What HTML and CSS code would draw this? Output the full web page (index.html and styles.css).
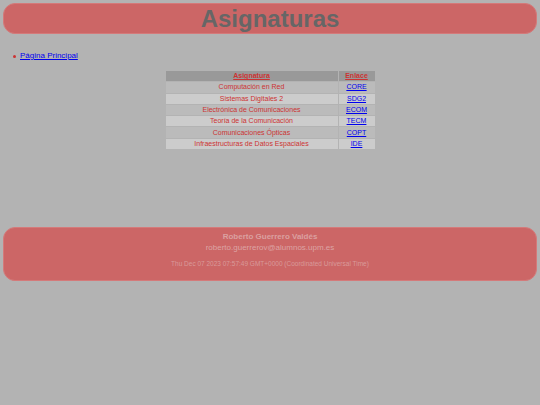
FILE: index.html
```html
<!DOCTYPE html>
<html lang="es">
<head>
<meta charset="utf-8">
<title>Asignaturas</title>
<link rel="stylesheet" href="styles.css">
</head>
<body>
<header class="banner"><h1 class="title">Asignaturas</h1></header>
<main class="content">
  <ul class="nav">
    <li><a href="#">Página Principal</a></li>
  </ul>
  <table class="subjects">
    <thead>
      <tr><th class="c1">Asignatura</th><th class="c2">Enlace</th></tr>
    </thead>
    <tbody>
      <tr class="odd"><td>Computación en Red</td><td class="lnk"><a href="#">CORE</a></td></tr>
      <tr class="even"><td>Sistemas Digitales 2</td><td class="lnk"><a href="#">SDG2</a></td></tr>
      <tr class="odd"><td>Electrónica de Comunicaciones</td><td class="lnk"><a href="#">ECOM</a></td></tr>
      <tr class="even"><td>Teoría de la Comunicación</td><td class="lnk"><a href="#">TECM</a></td></tr>
      <tr class="odd"><td>Comunicaciones Ópticas</td><td class="lnk"><a href="#">COPT</a></td></tr>
      <tr class="even"><td>Infraestructuras de Datos Espaciales</td><td class="lnk"><a href="#">IDE</a></td></tr>
    </tbody>
  </table>
</main>
<footer class="foot">
  <div class="name">Roberto Guerrero Valdés</div>
  <div class="mail">roberto.guerrerov@alumnos.upm.es</div>
  <div class="date">Thu Dec 07 2023 07:57:49 GMT+0000 (Coordinated Universal Time)</div>
</footer>
</body>
</html>
```
FILE: styles.css
```css
html, body {
  margin: 0;
  padding: 0;
  background: #b3b3b3;
  font-family: "Liberation Sans", Arial, sans-serif;
}
body {
  padding: 3px;
}
.banner {
  background: #cc6666;
  border: 1px solid #d47a7a;
  border-radius: 12px;
  height: 29px;
  display: flex;
  align-items: center;
  justify-content: center;
}
.title {
  margin: 0;
  font-size: 24px;
  font-weight: bold;
  color: #666666;
  line-height: 29px;
}
.content {
  height: 193px;
  padding-top: 17px;
  box-sizing: border-box;
}
.nav {
  margin: 0;
  padding-left: 10px;
  list-style: none;
  font-size: 8px;
  line-height: 10px;
}
.nav li {
  display: flex;
  align-items: center;
}
.nav li::before {
  content: "";
  width: 3px;
  height: 3px;
  border-radius: 50%;
  background: #cc3333;
  margin-right: 4px;
}
.nav a {
  color: #0000ee;
}
.subjects {
  margin: 9px auto 0;
  border-collapse: separate;
  border-spacing: 1px;
  font-size: 7px;
  color: #cc3333;
  text-align: center;
}
.subjects th, .subjects td {
  padding: 0 3px;
  height: 10.3px;
  line-height: 10px;
}
.subjects th {
  background: #999999;
  text-decoration: underline;
  font-weight: bold;
}
.subjects .c1 { width: 166px; }
.subjects .c2 { width: 30px; }
.subjects .odd td { background: #bbbbbb; }
.subjects .even td { background: #cccccc; }
.subjects a { color: #0000ee; }
.foot {
  background: #cc6666;
  border: 1px solid #d47a7a;
  border-radius: 12px;
  height: 48px;
  text-align: center;
  padding-top: 4px;
}
.name {
  font-size: 8px;
  font-weight: bold;
  color: #dba0a0;
  line-height: 10px;
}
.mail {
  font-size: 8px;
  color: #dca4a4;
  line-height: 12px;
}
.date {
  margin-top: 6px;
  font-size: 6.5px;
  color: #d99a9a;
  line-height: 8px;
}
```
